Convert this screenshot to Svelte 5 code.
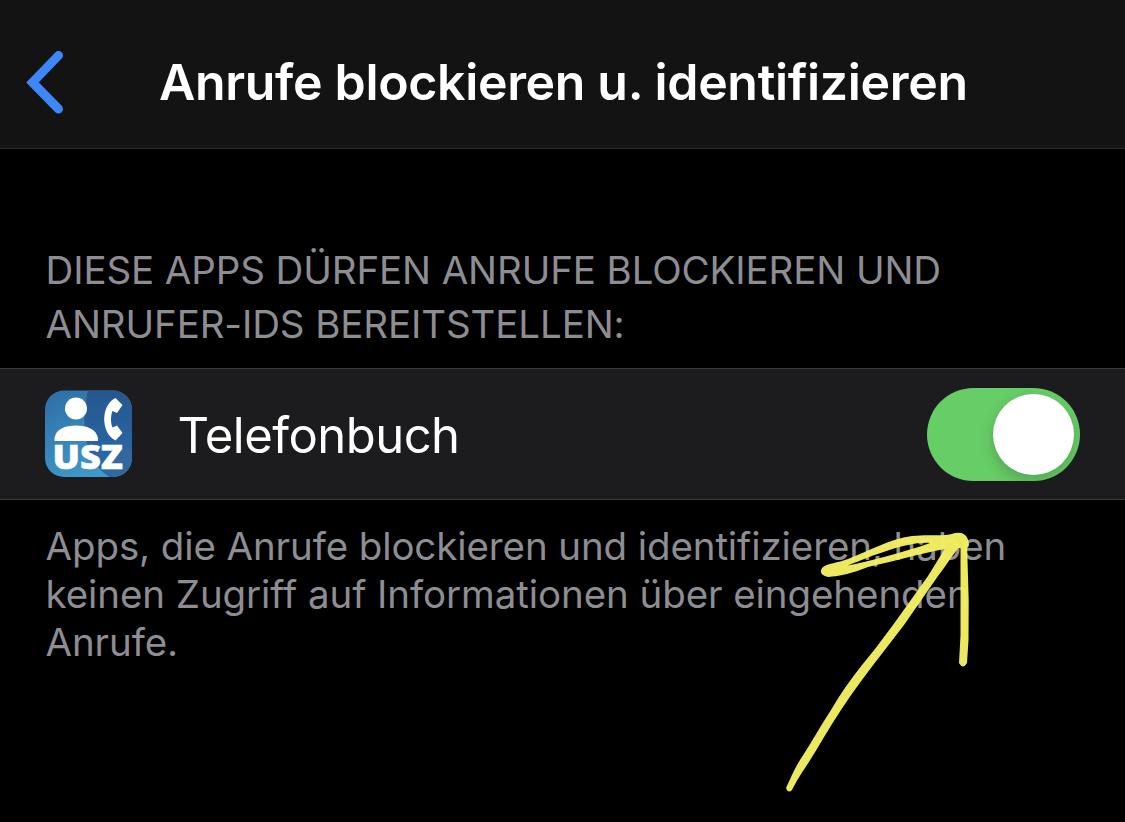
<script>
  let enabled = $state(true);
</script>

<main class="screen">
  <header>
    <button class="back" aria-label="Zurück">
      <svg width="40" height="66" viewBox="0 0 40 66"><path d="M34.500 6.500 8.500 33.500l26 26.500" fill="none" stroke="#3d87f6" stroke-width="9" stroke-linecap="round" stroke-linejoin="miter" /></svg>
    </button>
    <h1>Anrufe blockieren u. identifizieren</h1>
  </header>

  <h2><span>DIESE APPS DÜRFEN ANRUFE BLOCKIEREN UND</span><span>ANRUFER-IDS BEREITSTELLEN:</span></h2>

  <section class="row">
    <svg class="icon" width="88" height="88" viewBox="0 0 88 88">
      <defs>
        <linearGradient id="sky" x1="0" y1="0" x2="0.5" y2="1"><stop offset="0" stop-color="#2d6da6" /><stop offset="1" stop-color="#4099c8" /></linearGradient>
        <linearGradient id="deep" x1="0" y1="0" x2="0" y2="1"><stop offset="0" stop-color="#25578f" /><stop offset="1" stop-color="#2b6cab" /></linearGradient>
        <clipPath id="tile"><rect x="1" y="0.5" width="87" height="86.500" rx="19" /></clipPath>
      </defs>
      <g clip-path="url(#tile)">
        <rect width="88" height="88" fill="url(#sky)" />
        <path d="M44 0h44v65C74 72 68 78 67 88C46 76 34 47 44 0Z" fill="url(#deep)" />
        <path d="M67 88c-3-18 5-29 21-29v29Z" fill="#31689f" />
      </g>
      <circle cx="32" cy="18.500" r="11" fill="#fff" />
      <path d="M10.500 51V48C12 39 21 35.500 32 35.500S52 39 54 48v3Z" fill="#fff" />
      <path d="M71.500 8 78.500 15 73 23 68.500 21C66.500 25.500 66.500 33.500 68.500 37.500L73 35.500 78.500 43 71.500 50.500C56.500 43 56.500 15 71.500 8Z" fill="#fff" />
      <text x="8.500" y="78.500" textLength="70.500" lengthAdjust="spacingAndGlyphs">USZ</text>
    </svg>
    <span class="name">Telefonbuch</span>
    <button class="toggle" class:on={enabled} role="switch" aria-checked={enabled} aria-label="Telefonbuch" onclick={() => (enabled = !enabled)}><i></i></button>
  </section>

  <p><span>Apps, die Anrufe blockieren und identifizieren, haben</span><span class="wide">keinen Zugriff auf Informationen über eingehenden</span><span>Anrufe.</span></p>

  <svg class="arrow" width="1125" height="822" viewBox="0 0 1125 822" aria-hidden="true">
    <g fill="#f4f164">
      <path d="M822 568C827 563 838 563 848 559C869 551 889 539 912 536C929 534 944 537 955 533Q968 531 969 545Q968 551 956 547C925 552 899 560 868 567Q846 576 828 577Q818 575 822 568ZM848 565.500C870 561 902 553 930 543C909 541 874 555 848 565.500Z" fill-rule="evenodd" />
      <path d="M953 538Q954 533 961 533Q967 535 967 543L968.700 600L968.500 640L967 663Q963 670 959 663L960.500 635L960.500 600L960.500 545Z" />
      <path d="M953 537L966 541C957 547 949 562 938 576L904 625L884 651C869 670 854 690 841 710C829 728 818 748 807 765C801 774 797 780 792 790Q788 794 786 788C791 777 795 768 800 760C811 743 820 727 831 710C840 694 851 679 862 665L875 649L893 625L928 576C937 562 942 553 948 543Z" />
    </g>
  </svg>
</main>

<style>
  :global(body) { margin: 0; background: #000; }
  .screen { position: relative; width: 1125px; height: 822px; overflow: hidden; background: #000; color: #fff; font-family: Inter, sans-serif; }
  header { box-sizing: border-box; height: 149px; padding: 16px 24px 0; display: grid; grid-template-columns: 135px 1fr; align-items: center; background: #131313; border-bottom: 1px solid #2b2b2d; }
  button { border: 0; padding: 0; background: none; }
  .back { height: 66px; justify-self: start; }
  .back svg { display: block; }
  h1 { margin: 0; font-size: 50px; line-height: 60px; font-weight: 600; letter-spacing: -0.33px; white-space: nowrap; }
  h2, p { margin: 0; padding-left: 45.5px; color: #8d8d92; font-size: 38.5px; font-weight: 400; letter-spacing: -0.11px; }
  h2 span, p span { display: block; width: max-content; white-space: nowrap; }
  p .wide { letter-spacing: -0.08px; }
  h2 { padding-top: 94px; height: 125px; line-height: 54px; }
  .row { box-sizing: border-box; height: 132px; padding: 0 45px 0 44px; display: flex; align-items: center; background: #1c1c1e; border-top: 1px solid #3b3b3e; border-bottom: 1px solid #3b3b3e; }
  .icon { flex: none; }
  .icon text { font: 800 33px "Open Sans", sans-serif; fill: #fff; stroke: #fff; stroke-width: 0.5px; }
  .name { margin: 4px auto 0 45.5px; font-size: 49px; line-height: 60px; letter-spacing: -0.52px; }
  .toggle { box-sizing: border-box; width: 153px; height: 93px; padding: 6px; border-radius: 47px; display: flex; background: #39393d; overflow: hidden; }
  .toggle.on { background: #67ce67; justify-content: flex-end; }
  .toggle i { width: 81px; height: 81px; border-radius: 50%; background: #fff; box-shadow: 0 6px 16px #0003; }
  p { padding-top: 22px; line-height: 48px; }
  .arrow { position: absolute; inset: 0; pointer-events: none; opacity: 0.97; }
</style>
